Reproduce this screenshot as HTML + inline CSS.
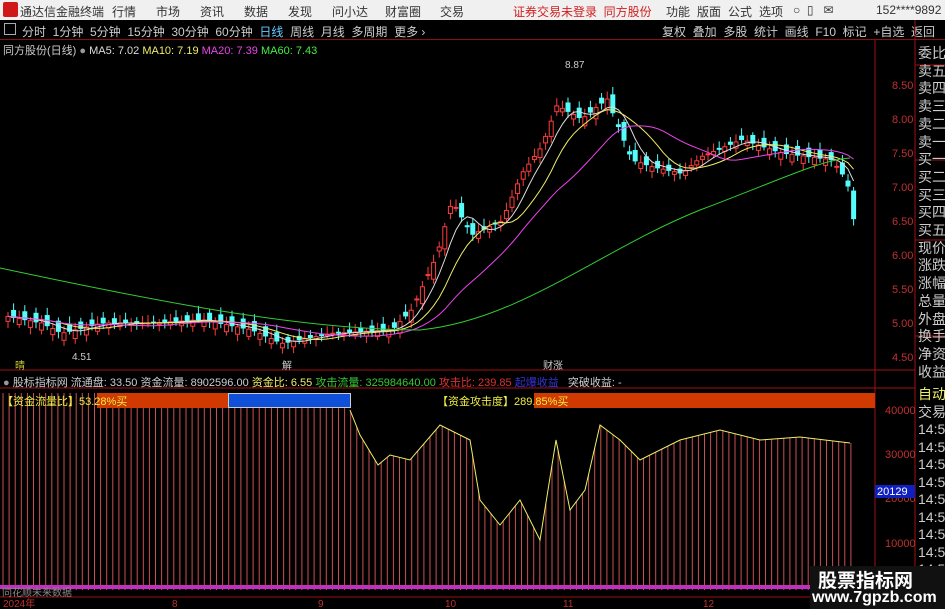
<!DOCTYPE html>
<html><head><meta charset="utf-8"><style>
*{margin:0;padding:0;box-sizing:border-box}
body{width:945px;height:609px;background:#000;overflow:hidden;position:relative;font-family:"Liberation Sans","Noto Sans CJK SC",sans-serif;font-size:12px;color:#ccc}
.a{position:absolute;white-space:nowrap}
#top{left:0;top:0;width:945px;height:20px;background:#f0f0f0;color:#333;font-size:12px}
#tb{left:0;top:20px;width:945px;height:20px;background:#000;border-bottom:1px solid #8b1010;font-size:12px;color:#ccc}
.rp{font-size:14px;color:#ccc;left:918px;line-height:17.7px}
</style></head><body>
<div class="a" id="top">
<div class="a" style="left:3px;top:2px;width:15px;height:15px;background:#d01818;border-radius:2px"></div>
<span class="a" style="left:20px;top:3px">通达信金融终端</span>
<span class="a" style="left:112px;top:3px">行情</span><span class="a" style="left:156px;top:3px">市场</span><span class="a" style="left:200px;top:3px">资讯</span><span class="a" style="left:244px;top:3px">数据</span><span class="a" style="left:288px;top:3px">发现</span><span class="a" style="left:332px;top:3px">问小达</span><span class="a" style="left:385px;top:3px">财富圈</span><span class="a" style="left:440px;top:3px">交易</span>
<span class="a" style="left:513px;top:3px;color:#d02020">证券交易未登录&nbsp;&nbsp;同方股份</span>
<span class="a" style="left:666px;top:3px">功能</span><span class="a" style="left:697px;top:3px">版面</span><span class="a" style="left:728px;top:3px">公式</span><span class="a" style="left:759px;top:3px">选项</span>
<span class="a" style="left:793px;top:3px">○&nbsp;&nbsp;▯&nbsp;&nbsp;&nbsp;✉</span>
<span class="a" style="left:876px;top:3px">152****9892</span>
</div>
<div class="a" id="tb">
<span class="a" style="left:4px;top:3px;width:12px;height:12px;border:1px solid #aaa"></span>
<span class="a" style="left:22px;top:3px">分时&nbsp;&nbsp;1分钟&nbsp;&nbsp;5分钟&nbsp;&nbsp;15分钟&nbsp;&nbsp;30分钟&nbsp;&nbsp;60分钟&nbsp;&nbsp;<b style="color:#6cf;font-weight:normal">日线</b>&nbsp;&nbsp;周线&nbsp;&nbsp;月线&nbsp;&nbsp;多周期&nbsp;&nbsp;更多 ›</span>
<span class="a" style="left:662px;top:3px;word-spacing:0">复权&nbsp;&nbsp;叠加&nbsp;&nbsp;多股&nbsp;&nbsp;统计&nbsp;&nbsp;画线&nbsp;&nbsp;F10&nbsp;&nbsp;标记&nbsp;&nbsp;+自选&nbsp;&nbsp;返回</span>
</div>
<div class="a" style="left:3px;top:42px;font-size:11px">同方股份(日线) <span style="color:#999">●</span> <span style="color:#ddd">MA5: 7.02</span> <span style="color:#ee6">MA10: 7.19</span> <span style="color:#e4e">MA20: 7.39</span> <span style="color:#4e4">MA60: 7.43</span></div>
<svg class="a" style="left:0;top:0" width="945" height="609" id="sv">
<line x1="875" y1="40" x2="875" y2="598" stroke="#a01010"/>
<line x1="915" y1="20" x2="915" y2="609" stroke="#a01010"/>
<line x1="0" y1="370" x2="915" y2="370" stroke="#a01010"/>
<line x1="0" y1="388" x2="915" y2="388" stroke="#a01010"/>
<line x1="0" y1="597" x2="915" y2="597" stroke="#a01010"/>
<g stroke="#a01010"><line x1="915" y1="65" x2="945" y2="65"/><line x1="915" y1="160" x2="945" y2="160"/><line x1="915" y1="240" x2="945" y2="240"/><line x1="915" y1="336" x2="945" y2="336"/></g>
<g fill="#c03030" font-size="11" font-family="Liberation Sans">
<text x="892" y="89">8.50</text><text x="892" y="123">8.00</text><text x="892" y="157">7.50</text><text x="892" y="191">7.00</text><text x="892" y="225">6.50</text><text x="892" y="259">6.00</text><text x="892" y="293">5.50</text><text x="892" y="327">5.00</text><text x="892" y="361">4.50</text>
<text x="885" y="414">40000</text><text x="885" y="458">30000</text><text x="885" y="502">20000</text><text x="885" y="547">10000</text>
</g>
<rect x="875" y="485" width="40" height="13" fill="#1020c0"/><text x="877" y="495" fill="#fff" font-size="11">20129</text>
<g id="g"></g>
<text x="565" y="68" fill="#ccc" font-size="10">8.87</text>
<text x="72" y="360" fill="#ccc" font-size="10">4.51</text>
<text x="15" y="369" fill="#cc3" font-size="10">晴</text>
<text x="282" y="369" fill="#ccc" font-size="10">解</text>
<text x="543" y="369" fill="#ccc" font-size="10">财涨</text>
<g fill="#c03030" font-size="10"><text x="3" y="607">2024年</text><text x="172" y="607">8</text><text x="318" y="607">9</text><text x="445" y="607">10</text><text x="563" y="607">11</text><text x="703" y="607">12</text></g>
</svg>
<div class="a" style="left:3px;top:374px;font-size:11px"><span style="color:#999">●</span> 股标指标网 流通盘: 33.50 资金流量: 8902596.00 <span style="color:#ee6">资金比: 6.55</span> <span style="color:#3c3">攻击流量: 325984640.00</span> <span style="color:#d33">攻击比: 239.85</span> <span style="color:#33d">起爆收益</span>&nbsp;&nbsp; 突破收益: -</div>
<div class="a" style="left:97px;top:393px;width:131px;height:15px;background:#d03a00"></div>
<div class="a" style="left:228px;top:393px;width:123px;height:15px;background:#1050d8;border:1px solid #ccc"></div>
<div class="a" style="left:534px;top:393px;width:341px;height:15px;background:#d03a00"></div>
<div class="a" style="left:2px;top:393px;font-size:11px;color:#ee4">【资金流量比】53.28%买</div>
<div class="a" style="left:437px;top:393px;font-size:11px;color:#ee4">【资金攻击度】289.85%买</div>
<div class="a" style="left:2px;top:584px;font-size:10px;color:#888">同花顺未来数据</div>
<div class="a rp" style="top:45px">委比<br>卖五<br>卖四<br>卖三<br>卖二<br>卖一<br>买一<br>买二<br>买三<br>买四<br>买五<br>现价<br>涨跌<br>涨幅<br>总量<br>外盘<br>换手<br>净资<br>收益</div>
<div class="a" style="left:916px;top:387px;width:29px;height:222px;background:#000"></div>
<div class="a rp" style="top:386px;line-height:17.5px"><span style="color:#ee6">自动</span><br>交易<br>14:56<br>14:56<br>14:56<br>14:56<br>14:56<br>14:56<br>14:56<br>14:56<br>14:56</div>
<div class="a" style="left:810px;top:566px;width:135px;height:43px;background:#111"></div>
<div class="a" style="left:818px;top:566px;font-size:19px;color:#fff;font-weight:bold">股票指标网</div>
<div class="a" style="left:812px;top:589px;font-size:16px;color:#fff;font-weight:bold">www.7gpzb.com</div>
<script>
var pts=[[5,5.1],[40,5.0],[60,4.85],[100,5.0],[150,5.0],[200,5.05],[250,4.9],[280,4.7],[330,4.85],[390,4.9],[410,5.2],[435,6.0],[450,6.8],[470,6.3],[500,6.5],[520,7.2],[540,7.6],[555,8.2],[580,8.0],[605,8.3],[630,7.4],[650,7.3],[680,7.2],[700,7.45],[740,7.7],[780,7.5],[830,7.4],[845,7.1],[852,6.5]];
function P(x){for(var i=1;i<pts.length;i++)if(x<=pts[i][0]){var a=pts[i-1],b=pts[i];return a[1]+(b[1]-a[1])*(x-a[0])/(b[0]-a[0]);}return 6.5}
function Y(p){return 85+(8.5-p)*68}
var s='';var cl=[];
for(var x=6;x<=852;x+=5.6){var c=P(x),o=P(x-4)+(Math.sin(x*1.7)*0.12);cl.push(c);var up=c>=o,t=Y(Math.max(o,c)),b=Y(Math.min(o,c));if(b-t<1)b=t+1;var col=up?'#ff3c3c':'#54fcfc';s+='<line x1="'+(x+2)+'" x2="'+(x+2)+'" y1="'+(t-3-Math.abs(Math.sin(x))*5)+'" y2="'+(b+3+Math.abs(Math.cos(x))*4)+'" stroke="'+col+'"/>';s+='<rect x="'+x+'" y="'+t+'" width="4" height="'+(b-t)+'" fill="'+(up?'#000':col)+'" stroke="'+col+'"/>';}
function ma(n,col){var d='';for(var i=0;i<cl.length;i++){var st=Math.max(0,i-n+1),sm=0;for(var j=st;j<=i;j++)sm+=cl[j];d+=(i?'L':'M')+(8+i*5.6)+','+Y(sm/(i-st+1));}s+='<path d="'+d+'" fill="none" stroke="'+col+'"/>';}
ma(5,'#ddd');ma(10,'#ee6');ma(20,'#e4e');
s+='<path d="M0,268 C150,300 300,330 420,330 C520,320 600,250 700,210 C780,180 820,160 850,158" fill="none" stroke="#3c3"/>';
var v=[[350,410],[360,435],[378,465],[390,455],[410,460],[440,425],[470,440],[480,500],[500,525],[520,500],[540,540],[556,440],[570,510],[585,490],[600,425],[620,440],[640,460],[680,440],[720,430],[760,440],[800,437],[850,443]];
function V(x){if(x<350)return 393;for(var i=1;i<v.length;i++)if(x<=v[i][0]){var a=v[i-1],b=v[i];return a[1]+(b[1]-a[1])*(x-a[0])/(b[0]-a[0]);}return 443}
for(var x=3;x<=852;x+=6.1){s+='<line x1="'+x+'" x2="'+x+'" y1="'+V(x)+'" y2="590" stroke="#c85050"/>';}
var d='M350,410';for(var i=1;i<v.length;i++)d+='L'+v[i][0]+','+v[i][1];s+='<path d="'+d+'" fill="none" stroke="#ee6"/>';
s+='<rect x="0" y="585" width="852" height="4" fill="#c030c0"/>';
document.getElementById('g').innerHTML=s;
</script>
</body></html>
